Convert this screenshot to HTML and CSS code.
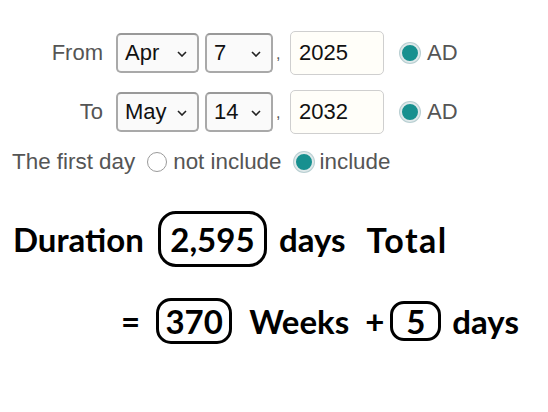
FILE: index.html
```html
<!DOCTYPE html>
<html>
<head>
<meta charset="utf-8">
<link rel="stylesheet" href="styles.css">
</head>
<body>
<div class="page">
  <div class="date-row">
    <span class="label">From</span>
    <span class="sel sel-month"><span class="sel-text">Apr</span><svg class="chev" viewBox="0 0 10 6" width="10" height="6"><path d="M1 1 L5 5 L9 1" fill="none" stroke="#222" stroke-width="1.6"/></svg></span>
    <span class="sel sel-day"><span class="sel-text">7</span><svg class="chev" viewBox="0 0 10 6" width="10" height="6"><path d="M1 1 L5 5 L9 1" fill="none" stroke="#222" stroke-width="1.6"/></svg></span>
    <span class="comma">,</span>
    <span class="year">2025</span>
    <span class="radio checked"></span>
    <span class="era">AD</span>
  </div>
  <div class="date-row">
    <span class="label">To</span>
    <span class="sel sel-month"><span class="sel-text">May</span><svg class="chev" viewBox="0 0 10 6" width="10" height="6"><path d="M1 1 L5 5 L9 1" fill="none" stroke="#222" stroke-width="1.6"/></svg></span>
    <span class="sel sel-day"><span class="sel-text">14</span><svg class="chev" viewBox="0 0 10 6" width="10" height="6"><path d="M1 1 L5 5 L9 1" fill="none" stroke="#222" stroke-width="1.6"/></svg></span>
    <span class="comma">,</span>
    <span class="year">2032</span>
    <span class="radio checked"></span>
    <span class="era">AD</span>
  </div>
  <div class="first-row">
    <span>The first day</span>
    <span class="radio empty"></span>
    <span>not include</span>
    <span class="radio checked"></span>
    <span>include</span>
  </div>
  <div class="result-row duration">
    <span>Duration</span>
    <span class="pill pill-big">2,595</span>
    <span>days</span>
    <span class="total">Total</span>
  </div>
  <div class="result-row weeks">
    <span>=</span>
    <span class="pill pill-mid">370</span>
    <span class="w">Weeks</span>
    <span class="plus">+</span>
    <span class="pill pill-small">5</span>
    <span>days</span>
  </div>
</div>
</body>
</html>
```
FILE: styles.css
```css
html, body {
  margin: 0;
  padding: 0;
  background: #fff;
}
.page {
  padding-top: 31px;
  font-family: "Liberation Sans", Arial, sans-serif;
  color: #555;
  font-size: 22px;
}
.date-row {
  display: flex;
  align-items: center;
  height: 44px;
  margin-bottom: 15px;
}
.label {
  width: 103px;
  text-align: right;
  margin-right: 13px;
}
.sel {
  display: flex;
  align-items: center;
  justify-content: space-between;
  box-sizing: border-box;
  height: 40px;
  border: 2px solid #a9a9a9;
  border-top-color: #999;
  border-radius: 5px;
  background: #fafafa;
  color: #111;
  padding: 0 10px 0 7px;
}
.sel-month { width: 83px; }
.sel-day { width: 68px; margin-left: 6px; }
.chev { display: block; margin-top: 2px; }
.comma {
  width: 17px;
  padding-left: 3px;
  box-sizing: border-box;
  color: #555;
  font-size: 16px;
  align-self: flex-end;
  padding-bottom: 12px;
}
.year {
  box-sizing: border-box;
  width: 94px;
  height: 44px;
  display: flex;
  align-items: center;
  padding-left: 8px;
  border: 1px solid #cfcfcf;
  border-radius: 5px;
  background: #fffef9;
  color: #111;
}
.radio {
  box-sizing: border-box;
  display: inline-block;
  width: 20px;
  height: 20px;
  border-radius: 50%;
  flex: none;
}
.radio.checked {
  background: #17908f;
  border: 2px solid #dfe9ea;
  box-shadow: 0 0 0 1px #b9cfd2;
}
.radio.empty {
  border: 1px solid #9a9a9a;
  background: #fff;
}
.date-row .radio { margin-left: 16px; }
.era { margin-left: 7px; }
.first-row {
  display: flex;
  align-items: center;
  padding-left: 12px;
  margin-top: -4px;
  height: 34px;
  font-size: 22.4px;
}
.first-row .radio { margin: 0 6px 0 12px; }
.result-row {
  display: flex;
  align-items: center;
  font-family: Lato, "Open Sans", sans-serif;
  font-weight: 700;
  color: #000;
}
.duration {
  margin-top: 32px;
  padding-left: 13px;
  font-size: 33px;
  height: 56px;
}
.pill {
  box-sizing: border-box;
  border: 3px solid #000;
  display: flex;
  align-items: center;
  justify-content: center;
}
.pill-big {
  width: 109px;
  height: 56px;
  border-radius: 18px;
  margin: 0 12px 0 14px;
}
.total { margin-left: 21px; letter-spacing: 1.5px; font-size: 34px; }
.weeks {
  margin-top: 31px;
  padding-left: 121px;
  font-size: 33px;
  height: 46px;
}
.pill-mid {
  width: 76px;
  height: 46px;
  border-radius: 15px;
  margin: 0 17px 0 16px;
}
.plus { margin-left: 16px; }
.pill-small {
  width: 51px;
  height: 40px;
  border-radius: 14px;
  margin: 0 11px 0 6px;
}
```
